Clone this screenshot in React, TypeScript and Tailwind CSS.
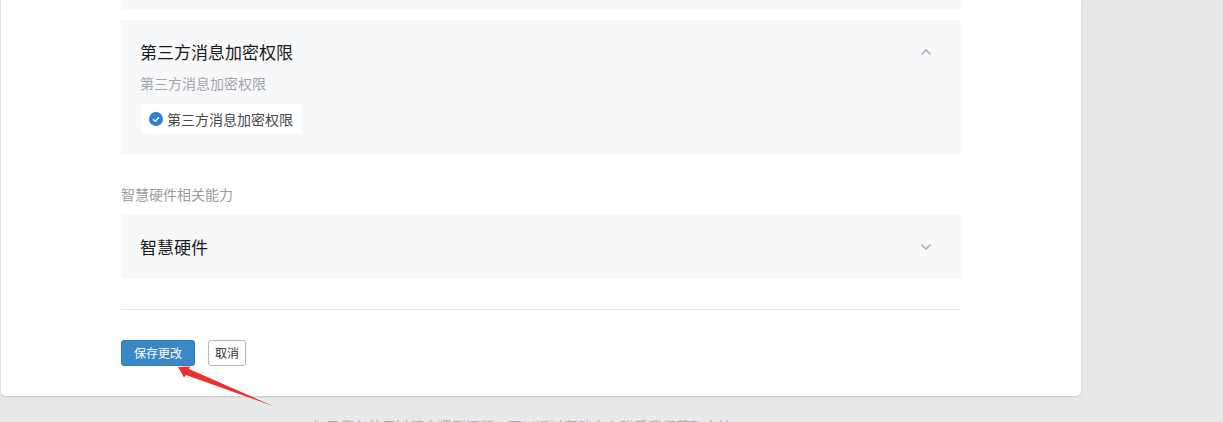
const cjk = { fontFamily: '"Microsoft YaHei", "Noto Sans CJK SC", "Liberation Sans", sans-serif' };

function Chevron({ up }: { up?: boolean }) {
  return (
    <svg width="12" height="8" viewBox="0 0 12 8" fill="none" stroke="#adb0b5" strokeWidth="1.6">
      <path d={up ? 'M1.5 6.5 L6 2 L10.5 6.5' : 'M1.5 1.5 L6 6 L10.5 1.5'} />
    </svg>
  );
}

export default function App() {
  return (
    <div className="relative h-[422px] w-[1223px] overflow-hidden bg-[#e9e9eb]" style={cjk}>
      {/* card */}
      <div className="ml-px h-[396px] w-[1080px] rounded-b-[5px] bg-white px-[120px] shadow-[0_1px_2px_rgba(0,0,0,0.15)]">
        <div className="h-[9px] w-[840px] bg-[#f7f8fa]" />

        <section className="mt-[11px] h-[135px] w-[840px] rounded-[1px] bg-[#f7f8fa] pl-[19px] pr-5 pt-[21px]">
          <div className="flex h-[22px] items-center justify-between pr-[9px]">
            <h3 className="text-[17px] leading-[22px] text-[#1a1a1a]">第三方消息加密权限</h3>
            <Chevron up />
          </div>
          <p className="mt-[10px] text-sm leading-5 text-[#a3a5a9]">第三方消息加密权限</p>
          <div className="mt-[11px] ml-px flex h-[30px] w-[160px] items-center gap-1 bg-white pl-2">
            <svg width="14" height="14" viewBox="0 0 14 14">
              <circle cx="7" cy="7" r="7" fill="#2f7fd8" />
              <path d="M4 7.2 L6.2 9.3 L10 5.2" fill="none" stroke="#fff" strokeWidth="1.5" />
            </svg>
            <span className="text-sm leading-5 text-[#45484d]">第三方消息加密权限</span>
          </div>
        </section>

        <p className="mt-[29px] text-sm leading-5 text-[#9a9ca0]">智慧硬件相关能力</p>

        <section className="mt-[11px] flex h-16 w-[840px] items-center justify-between rounded-[1px] bg-[#f7f8fa] pl-[19px] pr-[29px]">
          <h3 className="text-[17px] leading-[22px] text-[#1a1a1a]">智慧硬件</h3>
          <Chevron />
        </section>

        <div className="mt-[30px] h-px w-[839px] bg-[#e4e5e7]" />

        <div className="mt-[30px] flex items-center gap-[13px]">
          <button className="h-[26px] w-[74px] rounded-[3px] border border-[#2e78b4] bg-[#3a87c6] pb-px text-xs text-white">保存更改</button>
          <button className="h-[26px] w-[38px] rounded-[3px] border border-[#b5b5b5] bg-white pb-px text-xs text-[#333]">取消</button>
        </div>
      </div>

      <p className="ml-[312px] mt-[20px] whitespace-nowrap text-sm leading-5 text-[#a9a9ab]">如果您在使用过程中遇到问题，可以通过帮助中心联系我们获取支持。</p>

      {/* annotation arrow */}
      <svg className="absolute left-[170px] top-[355px]" width="110" height="56" viewBox="0 0 110 56">
        <path d="M8 12 L20 11.5 L19 14 L103 51 L16 20 L14 22.5 Z" fill="#e8312a" />
      </svg>
    </div>
  );
}
